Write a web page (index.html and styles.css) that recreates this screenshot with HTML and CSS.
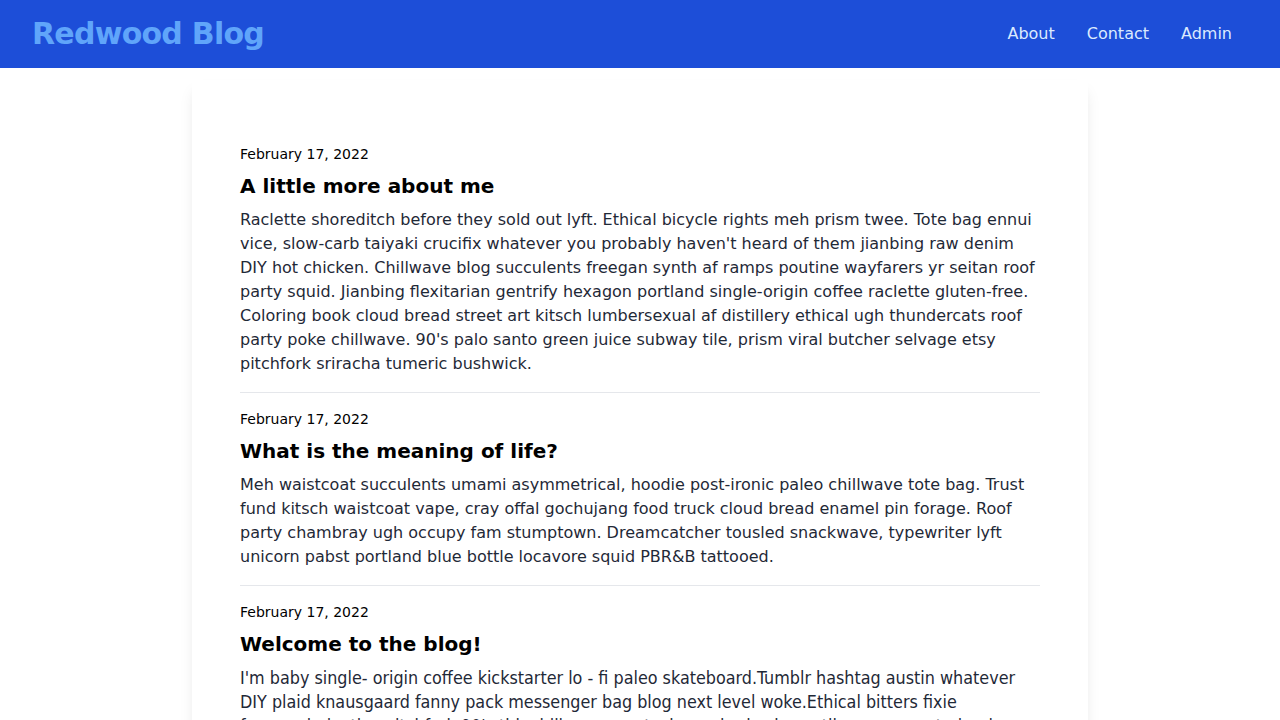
FILE: index.html
```html
<!DOCTYPE html>
<html lang="en">
<head>
<meta charset="utf-8">
<title>Redwood Blog</title>
<link rel="stylesheet" href="styles.css">
</head>
<body>
<header class="site-header">
  <h1 class="brand"><a href="#">Redwood Blog</a></h1>
  <nav class="nav">
    <a href="#">About</a>
    <a href="#">Contact</a>
    <a href="#">Admin</a>
  </nav>
</header>
<main class="main">
  <div class="card">
    <article class="post">
      <div class="date">February 17, 2022</div>
      <h2 class="title">A little more about me</h2>
      <p class="body">Raclette shoreditch before they sold out lyft. Ethical bicycle rights meh prism twee. Tote bag ennui vice, slow-carb taiyaki crucifix whatever you probably haven't heard of them jianbing raw denim DIY hot chicken. Chillwave blog succulents freegan synth af ramps poutine wayfarers yr seitan roof party squid. Jianbing flexitarian gentrify hexagon portland single-origin coffee raclette gluten-free. Coloring book cloud bread street art kitsch lumbersexual af distillery ethical ugh thundercats roof party poke chillwave. 90's palo santo green juice subway tile, prism viral butcher selvage etsy pitchfork sriracha tumeric bushwick.</p>
    </article>
    <article class="post">
      <div class="date">February 17, 2022</div>
      <h2 class="title">What is the meaning of life?</h2>
      <p class="body">Meh waistcoat succulents umami asymmetrical, hoodie post-ironic paleo chillwave tote bag. Trust fund kitsch waistcoat vape, cray offal gochujang food truck cloud bread enamel pin forage. Roof party chambray ugh occupy fam stumptown. Dreamcatcher tousled snackwave, typewriter lyft unicorn pabst portland blue bottle locavore squid PBR&amp;B tattooed.</p>
    </article>
    <article class="post">
      <div class="date">February 17, 2022</div>
      <h2 class="title">Welcome to the blog!</h2>
      <p class="body condensed">I'm baby single- origin coffee kickstarter lo - fi paleo skateboard.Tumblr hashtag austin whatever DIY plaid knausgaard fanny pack messenger bag blog next level woke.Ethical bitters fixie freegan,helvetica pitchfork 90's tbh chillwave mustache godard subway tile ramps post - ironic offal selfies six - pack.Ethical bitters fixie freegan, helvetica pitchfork.</p>
    </article>
  </div>
</main>
</body>
</html>
```

FILE: styles.css
```css
* { box-sizing: border-box; }
html, body { margin: 0; padding: 0; }
body {
  font-family: "DejaVu Sans", sans-serif;
  background: #ffffff;
  color: #000;
}
a { text-decoration: none; color: inherit; }

.site-header {
  display: flex;
  justify-content: space-between;
  align-items: center;
  background: #1d4ed8;
  padding: 16px 32px;
  height: 68px;
}
.brand {
  margin: 0;
  font-size: 30px;
  line-height: 36px;
  font-weight: 700;
  letter-spacing: -0.025em;
  color: #60a5fa;
}
.nav { display: flex; }
.nav a {
  padding: 0 16px;
  font-size: 16px;
  line-height: 24px;
  color: #dbeafe;
}

.main {
  max-width: 896px;
  margin: 12px auto 0;
}
.card {
  background: #fff;
  padding: 48px;
  box-shadow: 0 10px 15px -3px rgba(0,0,0,0.1), 0 4px 6px -4px rgba(0,0,0,0.1);
}
.post {
  padding: 16px 0;
  border-bottom: 1px solid #e5e7eb;
}
.date {
  font-size: 14px;
  line-height: 20px;
  color: #000;
}
.title {
  margin: 8px 0 0;
  font-size: 20px;
  line-height: 28px;
  font-weight: 700;
  color: #000;
}
.body {
  margin: 8px 0 0;
  font-size: 16px;
  line-height: 24px;
  color: #1f2937;
}
.condensed {
  font-family: "DejaVu Sans Condensed", "DejaVu Sans", sans-serif;
  font-size: 17.8px;
  line-height: 24px;
}
```
